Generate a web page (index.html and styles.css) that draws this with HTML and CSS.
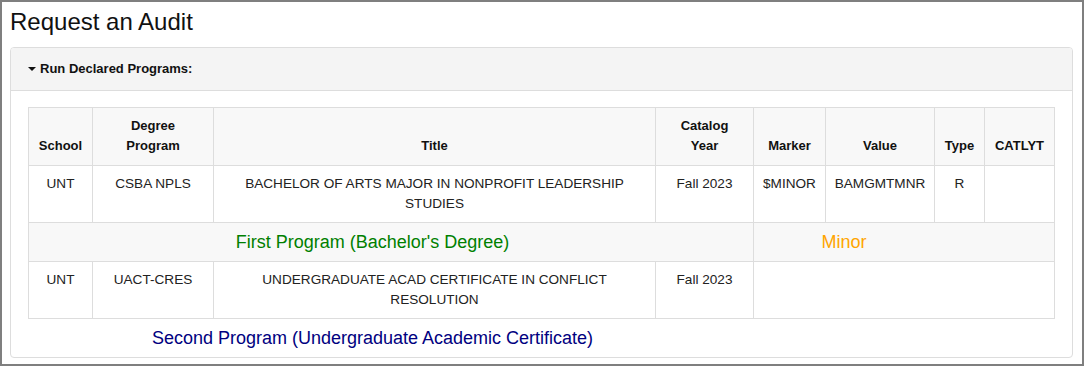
FILE: index.html
```html
<!DOCTYPE html>
<html lang="en">
<head>
<meta charset="utf-8">
<title>Request an Audit</title>
<link rel="stylesheet" href="styles.css">
</head>
<body>
<div class="frame">
  <h1 class="page-title">Request an Audit</h1>
  <div class="card">
    <div class="card-header"><span class="caret"></span>Run Declared Programs:</div>
    <div class="card-body">
      <table class="programs">
        <colgroup>
          <col class="c-school"><col class="c-degree"><col class="c-title"><col class="c-cat">
          <col class="c-marker"><col class="c-value"><col class="c-type"><col class="c-catlyt">
        </colgroup>
        <thead>
          <tr>
            <th>School</th>
            <th>Degree<br>Program</th>
            <th>Title</th>
            <th>Catalog<br>Year</th>
            <th>Marker</th>
            <th>Value</th>
            <th>Type</th>
            <th>CATLYT</th>
          </tr>
        </thead>
        <tbody>
          <tr>
            <td>UNT</td>
            <td>CSBA NPLS</td>
            <td>BACHELOR OF ARTS MAJOR IN NONPROFIT LEADERSHIP STUDIES</td>
            <td>Fall 2023</td>
            <td>$MINOR</td>
            <td>BAMGMTMNR</td>
            <td>R</td>
            <td></td>
          </tr>
          <tr class="group-row">
            <td colspan="4" class="label-main"><span class="lbl-first">First Program (Bachelor's Degree)</span></td>
            <td colspan="4" class="label-side"><span class="lbl-minor">Minor</span></td>
          </tr>
          <tr>
            <td>UNT</td>
            <td>UACT-CRES</td>
            <td>UNDERGRADUATE ACAD CERTIFICATE IN CONFLICT RESOLUTION</td>
            <td>Fall 2023</td>
            <td colspan="4"></td>
          </tr>
          <tr class="plain-row">
            <td colspan="4" class="label-main"><span class="lbl-second">Second Program (Undergraduate Academic Certificate)</span></td>
            <td colspan="4"></td>
          </tr>
        </tbody>
      </table>
    </div>
  </div>
</div>
</body>
</html>
```
FILE: styles.css
```css
html, body {
  margin: 0;
  padding: 0;
  background: #ffffff;
}

body {
  font-family: "Liberation Sans", Arial, sans-serif;
  font-size: 13px;
  color: #333333;
}

.frame {
  box-sizing: border-box;
  height: 366px;
  width: 1084px;
  border: 2px solid #7f7f7f;
  padding: 0 9px 0 8px;
  overflow: hidden;
}

.page-title {
  margin: 7px 0 12px;
  font-size: 24px;
  line-height: 26px;
  font-weight: normal;
  color: #111111;
}

.card {
  border: 1px solid #dddddd;
  border-radius: 4px;
  background: #ffffff;
}

.card-header {
  background: #f4f4f4;
  border-bottom: 1px solid #dddddd;
  border-radius: 3px 3px 0 0;
  padding: 11px 17px;
  line-height: 20px;
  font-weight: bold;
  color: #111111;
}

.caret {
  display: inline-block;
  width: 0;
  height: 0;
  border-top: 4px solid #111111;
  border-left: 4px solid transparent;
  border-right: 4px solid transparent;
  vertical-align: middle;
  margin-right: 4px;
  margin-top: -2px;
}

.card-body {
  padding: 16px 18px 0 17px;
}

.programs {
  width: 100%;
  border-collapse: collapse;
  table-layout: fixed;
}

.c-school { width: 64px; }
.c-degree { width: 121px; }
.c-title { width: 442px; }
.c-cat { width: 98px; }
.c-marker { width: 72px; }
.c-value { width: 109px; }
.c-type { width: 50px; }
.c-catlyt { width: 70px; }

.programs th,
.programs td {
  border: 1px solid #dddddd;
  padding: 8px;
  line-height: 20px;
  text-align: center;
}

.programs th {
  background: #f8f8f8;
  vertical-align: bottom;
  font-weight: bold;
  color: #111111;
  padding-bottom: 9px;
}

.programs td {
  vertical-align: top;
  color: #222222;
  font-size: 13.6px;
}

.group-row td {
  background: #f8f8f8;
  font-size: 18px;
  line-height: 22px;
}

.plain-row td {
  border: none;
  font-size: 18px;
  line-height: 22px;
}

.label-main {
  padding-right: 45px !important;
}

.label-side {
  padding-right: 128px !important;
}

.lbl-first { color: #008000; }
.lbl-minor { color: #ffa500; }
.lbl-second { color: #000080; }
```
